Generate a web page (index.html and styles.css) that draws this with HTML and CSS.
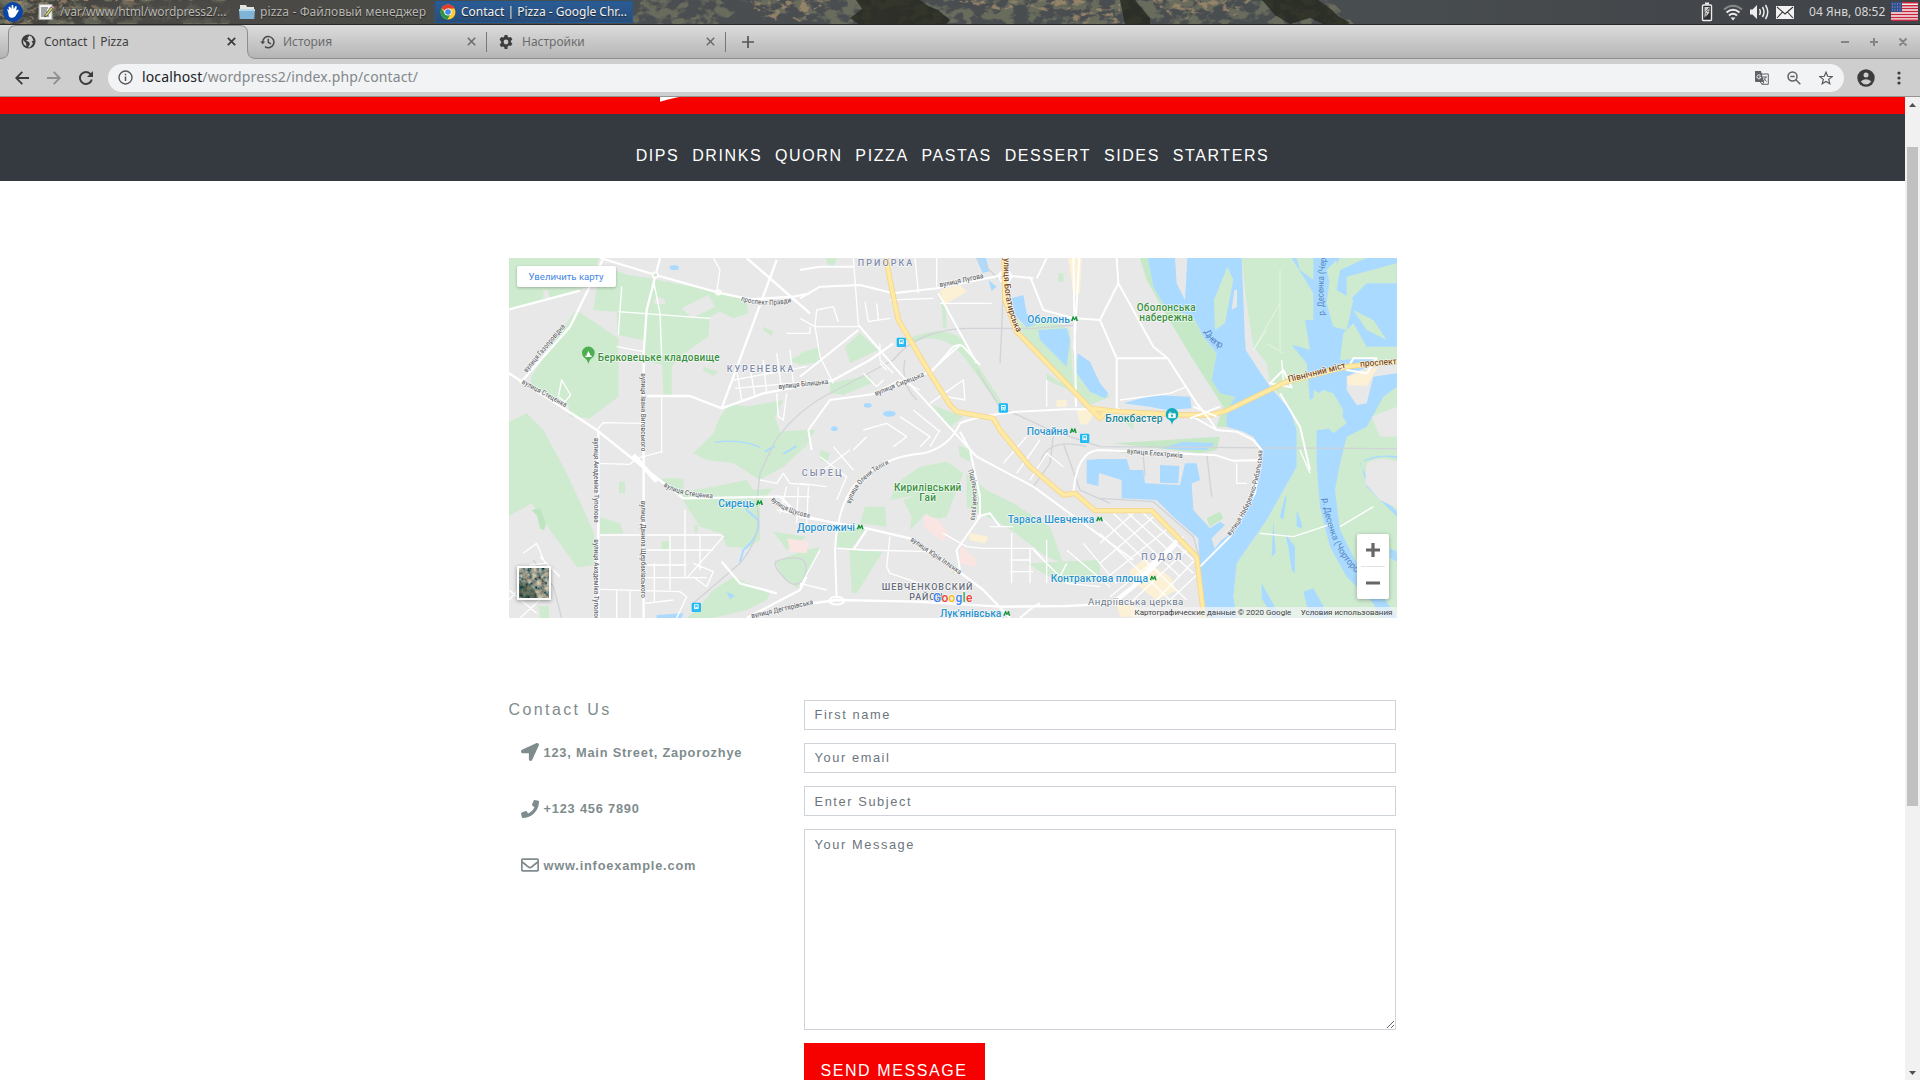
FILE: index.html
```html
<!DOCTYPE html>
<html lang="ru">
<head>
<meta charset="utf-8">
<title>Contact | Pizza</title>
<link rel="stylesheet" href="styles.css">
</head>
<body>
<div class="desktop">
  <header class="panel">
    <svg class="wallpaper" width="1920" height="25" viewBox="0 0 1920 25">
      <defs>
        <filter id="leaves" x="0" y="0" width="100%" height="100%">
          <feTurbulence type="fractalNoise" baseFrequency="0.07 0.1" numOctaves="5" seed="8"/>
          <feColorMatrix values="0 0 0 0 .14  0 0 0 0 .15  0 0 0 0 .11  7 0 0 0 -3.2"/>
          <feComposite in2="SourceGraphic" operator="in"/>
        </filter>
        <filter id="autumn" x="0" y="0" width="100%" height="100%">
          <feTurbulence type="fractalNoise" baseFrequency="0.11 0.16" numOctaves="4" seed="21"/>
          <feColorMatrix values="0 0 0 0 .34  0 0 0 0 .25  0 0 0 0 .15  0 6 0 0 -3.1"/>
          <feComposite in2="SourceGraphic" operator="in"/>
        </filter>
        <linearGradient id="sky"><stop offset="0" stop-color="#45443f"/><stop offset=".3" stop-color="#4b4e50"/><stop offset=".7" stop-color="#484d50"/><stop offset="1" stop-color="#404347"/></linearGradient>
      </defs>
      <rect width="1920" height="25" fill="url(#sky)"/>
      <path d="M0 0H230V25H0zM633 0H720L735 12 720 25H633zM740 0H1330L1355 25H840L790 18z" filter="url(#leaves)"/>
      <path d="M856 0H920L930 7 938 10 950 20 945 25H860L850 18 862 9zM1120 0H1135L1150 18V25H1125zM1262 0H1318L1332 10 1338 16 1350 23 1345 25H1325L1310 18 1290 24 1275 15z" fill="#25281e" opacity=".8"/>
      <path d="M0 0H150L120 12 80 25H0zM750 0H835L815 9 800 22 785 14 770 25 755 12zM950 0H1090L1075 7 1055 14 1030 6 1000 10zM1070 14L1120 4V25H1070zM1150 0H1250L1235 16 1215 8 1180 22z" filter="url(#autumn)" opacity=".85"/>
      <rect y="24" width="1920" height="1" fill="#2a2724"/>
    </svg>
    <div class="tasks">
      <svg class="launcher" width="20" height="20" viewBox="0 0 20 20"><circle cx="10" cy="10" r="10" fill="#0b45a8"/><path d="M4 7l2 1-.5-3 1.400-.6L8.500 7l.2-4 1.400-.1.7 4L12.600 4l1.200.6-.6 4 2-1 .5 1.200-2.500 4c-1 2-2.200 3-4.200 3-3 0-3.500-2-3.500-4z" fill="#fff"/></svg>
      <div class="task task-edit">
        <svg width="16" height="16" viewBox="0 0 16 16"><path d="M1 .5h13v15H1z" fill="#f3f3ef" stroke="#aaa"/><path d="M3 4h7M3 6h6M3 8h6M3 10h4M3 12h8" stroke="#555"/><path d="M7 11l6-8 2 1.500-6 7.500-2.500.7z" fill="#cfd36c" stroke="#333" stroke-width=".7"/><path d="M13 3l1-1.500 2 1.500-1 1.500z" fill="#e38cb3"/></svg>
        <span class="t1">/var/www/html/wordpress2/...</span>
      </div>
      <div class="task task-files">
        <svg width="16" height="14" viewBox="0 0 16 14"><path d="M1 0h6l1 2h7v4H1z" fill="#e8e5df"/><path d="M0 4h16l-.7 10H.7z" fill="#7fb4d6"/><path d="M0 4h16v2H0z" fill="#b6d7e9"/></svg>
        <span class="t2">pizza - Файловый менеджер</span>
      </div>
      <div class="task task-active">
        <svg width="16" height="16" viewBox="0 0 16 16"><circle cx="8" cy="8" r="7.500" fill="#fc3"/><path d="M8 8L1.500 4.200A7.500 7.500 0 0 1 14.600 4.500H8z" fill="#e33b2e"/><path d="M1.500 4.250A7.500 7.500 0 0 0 7.400 15.500L10.500 10 5 9.500z" fill="#279847"/><circle cx="8" cy="8" r="3.600" fill="#fff"/><circle cx="8" cy="8" r="2.800" fill="#4285f4"/></svg>
        <span class="t3">Contact | Pizza - Google Chr...</span>
      </div>
    </div>
    <div class="tray">
      <svg width="12" height="20" viewBox="0 0 12 20"><path d="M4 .5h4v2H4z" fill="#eee"/><rect x="1.500" y="3" width="9" height="15.500" rx="1" fill="#2b2d30" stroke="#eee" stroke-width="1.400"/><path d="M3.500 5h5v4l-5 7z" fill="#ccc"/><path d="M8 6l-5 5h3l-2 5 5-6H6z" fill="#fff" stroke="#222" stroke-width=".5"/></svg>
      <svg class="wifi" width="20" height="17" viewBox="0 0 20 17" fill="none" stroke-width="2"><path d="M1 5.500Q10-2 19 5.500" stroke="#888"/><path d="M3.500 8.500Q10 3 16.500 8.500M6 11.500Q10 8 14 11.500" stroke="#eee"/><path d="M7.500 13.500h5L10 16.500z" fill="#eee"/></svg>
      <svg class="vol" width="20" height="18" viewBox="0 0 20 18"><path d="M0 6.500h2.500L7 2v14l-4.500-4.500H0z" fill="#eee"/><path d="M9.500 6q1.700 3 0 6M12.500 4q3 5 0 10M15.500 2q4.500 7 0 14" fill="none" stroke="#eee" stroke-width="1.500"/></svg>
      <svg class="mail" width="18" height="13" viewBox="0 0 18 13"><rect width="18" height="13" fill="#f2f2f2"/><path d="M1 1l8 7 8-7M1 12l5.500-6M17 12l-5.500-6" fill="none" stroke="#333" stroke-width="1.100"/></svg>
      <span class="clock">04 Янв, 08:52</span>
      <svg class="flag" width="27" height="19" viewBox="0 0 27 19"><path fill="#f7f2f2" d="M0 0h27v19H0z"/><path d="M0 .7h27M0 3.700h27M0 6.600h27M0 9.500h27M0 12.400h27M0 15.400h27M0 18.300h27" stroke="#c8243e" stroke-width="1.500"/><path fill="#34508c" d="M0 0h11v10H0z"/><path d="M1 2h10M1 5h10M1 8h10" stroke="#8da0c8" stroke-dasharray="1 1.500"/></svg>
    </div>
  </header>

  <div class="tabstrip">
    <svg class="tab-shape" width="256" height="34" viewBox="0 0 256 34"><path d="M0 33.500Q8.500 33.500 8.500 25V8Q8.500.5 16 .5H240Q247.500.5 247.500 8V25Q247.500 33.500 256 33.500V34H0z" fill="#cecece"/><path d="M0 33.500Q8.500 33.500 8.500 25V8Q8.500.5 16 .5H240Q247.500.5 247.500 8V25Q247.500 33.500 256 33.500" fill="none" stroke="#8e8e8e"/></svg>
    <div class="tab tab-on">
      <svg width="15" height="15" viewBox="0 0 15 15"><circle cx="7.500" cy="7.500" r="7" fill="#3c3c3c"/><path d="M8.500 1.500l-2 2.500 1 1.500-2.500 1 3 1.500 1 2-2 3.500 2-.2 3-3.800-1.500-2 2-1-2-4zM2 6l3 3 .5 3.500L2.500 10z" fill="#cecece"/></svg>
      <span class="tt1">Contact | Pizza</span>
      <svg class="x" width="9" height="9" viewBox="0 0 9 9"><path d="M.8.8l7.400 7.400M8.200.8L.8 8.200" stroke="#3a3a3a" stroke-width="1.700"/></svg>
    </div>
    <div class="tab tab-hist">
      <svg width="15" height="14" viewBox="0 0 15 14" fill="none" stroke="#4a4a4a" stroke-width="1.500"><path d="M2.700 7A5.600 5.600 0 1 1 5 11.600"/><path d="M.2 6.500h5L2.700 9.300z" fill="#4a4a4a" stroke="none"/><path d="M8.300 3.800v3.500l2.600 1.500"/></svg>
      <span class="tt2">История</span>
      <svg class="x" width="9" height="9" viewBox="0 0 9 9"><path d="M.8.8l7.400 7.400M8.200.8L.8 8.200" stroke="#6a6a6a" stroke-width="1.500"/></svg>
    </div>
    <div class="tab tab-set">
      <svg width="14" height="14" viewBox="0 0 14 14"><path fill="#3d3d3d" fill-rule="evenodd" d="M5.600 0h2.800l.4 1.900 1.300.7 1.800-.7 1.500 2.500-1.500 1.300v1.600l1.500 1.300-1.500 2.500-1.800-.7-1.300.7L8.400 14H5.600l-.4-1.900-1.300-.7-1.800.7L.6 9.600l1.500-1.300V6.700L.6 4.400l1.500-2.500 1.800.7 1.300-.7zM7 4.600a2.400 2.400 0 1 0 0 4.800 2.400 2.400 0 0 0 0-4.800z"/></svg>
      <span class="tt3">Настройки</span>
      <svg class="x" width="9" height="9" viewBox="0 0 9 9"><path d="M.8.8l7.400 7.400M8.200.8L.8 8.200" stroke="#6a6a6a" stroke-width="1.500"/></svg>
    </div>
    <svg class="newtab" width="12" height="12" viewBox="0 0 12 12"><path d="M6 0v12M0 6h12" stroke="#555" stroke-width="1.700"/></svg>
    <svg class="winbtns" width="68" height="10" viewBox="0 0 68 10" stroke="#858585" stroke-width="2"><path d="M0 5h8M29 5h8M33 1v8M58.500 1.500l7 7M65.500 1.500l-7 7"/></svg>
  </div>

  <div class="toolbar">
    <svg class="back" width="14" height="14" viewBox="0 0 14 14" fill="none" stroke="#3c3c3c" stroke-width="1.800"><path d="M14 7H1.500M7.300.8L1.200 7l6.100 6.200"/></svg>
    <svg class="fwd" width="14" height="14" viewBox="0 0 14 14" fill="none" stroke="#8f8f8f" stroke-width="1.800"><path d="M0 7h12.500M6.700.8L12.800 7l-6.100 6.200"/></svg>
    <svg class="reload" width="14" height="14" viewBox="0 0 14 14"><path d="M11.700 3.300A6 6 0 1 0 12.800 8.500" fill="none" stroke="#3c3c3c" stroke-width="1.900"/><path d="M14 0v6H8z" fill="#3c3c3c"/></svg>
    <div class="omnibox">
      <svg width="15" height="15" viewBox="0 0 15 15"><circle cx="7.500" cy="7.500" r="6.500" fill="none" stroke="#55585c" stroke-width="1.400"/><path d="M7.500 6.500V11M7.500 3.800v1.500" stroke="#55585c" stroke-width="1.500"/></svg>
      <span class="url">localhost<i>/wordpress2/index.php/contact/</i></span>
      <svg class="trans" width="14" height="14" viewBox="0 0 14 14"><path d="M5 3h8.300v10.300H7.500L5 11z" fill="#f1f3f4" stroke="#5f6368"/><path d="M0 0h6l3 11H1a1 1 0 0 1-1-1z" fill="#5f6368"/><path d="M5.500 4.500A2 2 0 1 0 5.600 7V6H4" fill="none" stroke="#f1f3f4"/><path d="M7.500 6h4.500M10.500 6q-.5 3-2.500 4.500M9 7.500l2.500 3M7 13.500l2-2.500" stroke="#5f6368" fill="none"/></svg>
      <svg class="mag" width="14" height="14" viewBox="0 0 14 14" fill="none" stroke="#5f6368" stroke-width="1.500"><circle cx="5.500" cy="5.500" r="4.500"/><path d="M8.800 8.800l4.500 4.500M3.300 5.500h4.400"/></svg>
      <svg width="14" height="14" viewBox="0 0 14 14"><path d="M7 1.200l1.700 4.100 4.400.3-3.400 2.800 1.100 4.300L7 10.400l-3.800 2.300 1.100-4.300L.9 5.600l4.400-.3z" fill="none" stroke="#55585c" stroke-width="1.200"/></svg>
    </div>
    <svg class="avatar" width="18" height="18" viewBox="0 0 18 18"><circle cx="9" cy="9" r="8.700" fill="#3c3c3c"/><circle cx="9" cy="6" r="2.500" fill="#cecece"/><path d="M3.700 12.500Q9 8 14.300 12.500Q12 15.500 9 15.500T3.700 12.500z" fill="#cecece"/></svg>
    <svg class="dots" width="4" height="14" viewBox="0 0 4 14" fill="#3c3c3c"><circle cx="2" cy="2" r="1.600"/><circle cx="2" cy="7" r="1.600"/><circle cx="2" cy="12" r="1.600"/></svg>
  </div>

  <div class="viewport">
    <main class="page">
      <div class="brandbar"><svg width="20" height="5" viewBox="0 0 20 5"><path d="M0 0H19L8 2.500 0 4.700z" fill="#fff"/></svg></div>
      <nav class="menu">
        <a>DIPS</a><a>DRINKS</a><a>QUORN</a><a>PIZZA</a><a>PASTAS</a><a>DESSERT</a><a>SIDES</a><a>STARTERS</a>
      </nav>
      <div class="container">
        <div class="map">
<svg class="tiles" viewBox="27 24 2664 1080" width="888" height="360">
<defs>
<filter id="sat" x="0" y="0" width="100%" height="100%"><feTurbulence type="fractalNoise" baseFrequency=".07" numOctaves="5" seed="4"/><feColorMatrix values="1.100 0 0 0 -.26  .9 .2 0 0 -.24  .6 .3 0 0 -.2  0 0 0 0 1"/></filter>
</defs>
<rect x="27" y="24" width="2664" height="1080" fill="#e8e8e8"/>
<g fill="#ceebcf">
<path d="M27 24H297L290 50 240 122 130 150 27 178zM300 45L385 75 450 85 650 125 740 150 745 190 700 205 660 185 630 200 625 260 545 315 515 350V435H490L487 345 430 330V270L352 255 350 185 280 180zM228 180L355 265V440L270 505 210 500 205 465 90 410 95 380 150 290z"/>
<path d="M27 515L80 490 130 540 190 650 240 755 282 850V945L232 952 150 840 95 760 27 798z"/>
<path d="M640 550L660 500 690 460 740 470 850 450 825 500 840 545 905 540 905 600 850 650 780 690 700 640 620 630 580 610zM485 685H550V725L640 710 740 690 760 720 820 715 780 760V870L740 895 680 890 665 850 600 830 545 745 490 705zM300 802L360 820 370 850 300 852zM590 1080L640 1020 700 980 810 1030 800 1050 740 1080 640 1104H560zM825 935L900 905 960 890 920 980 890 1015 850 980zM820 845L920 860 860 900zM610 350l45 15-15 12-30-15zM790 230l30 15-5 12-25-15zM865 330L960 290V335L900 345zM357 695h18v35h-18zM485 873h22v25h-22zM583 825h10v22h-10zM640 825h14v22h-14zM115 1068h32v36h-25z"/>
<path d="M980 24h30l-10 30-20-15zM900 310L960 290 950 330 900 340zM1035 290L1080 250 1135 300 1050 340zM990 400L1110 375 1115 400 1030 435 990 430zM1315 130l20 0 5 105-10 0-5-60zM1230 265Q1330 220 1390 270L1430 340 1520 480 1505 480 1410 345Q1330 230 1240 280zM1295 465L1390 500 1350 530zM1515 180L1540 140 1560 220 1640 200 1710 240 1720 420 1700 400 1640 340 1560 240zM1640 370L1730 430 1640 390zM1720 310L1830 440 1770 465 1720 420zM1675 70h15v25h-15z"/>
<path d="M1190 700L1260 650 1340 635 1390 670 1370 720 1340 800 1300 810 1280 790 1230 840 1235 800 1210 750 1250 735 1170 750zM1400 670L1460 720 1540 760 1650 830 1690 940 1640 920 1520 830 1440 790 1400 770zM1375 585L1410 600V635L1380 620zM1010 840L1100 830 1055 895 1010 890zM1048 900L1148 905 1070 1030 1055 1030zM1095 770L1155 770 1160 830 1080 820zM900 540H945L910 600zM960 600l30 10-10 30-20-10zM1580 940L1800 930V990L1680 1000zM1360 940l25 30-30 0zM1850 495l50 0 0 45z"/>
<path d="M2225 24H2691V1104H2205L2200 1050 2210 940 2300 810 2390 650 2390 540 2370 480 2280 360 2240 250z"/>
<path d="M1920 24H1943L1960 110 1995 170 2080 200 2110 260 2150 310 2135 390 2205 430 2180 530H2150L2170 470 2080 330 1990 180 1940 90zM1840 580L2160 560 2150 600 2100 610zM2120 805l40-20 10 20-40 25zM1865 600h60v10h-60z" fill="#c5e8c6"/>
</g>
<path d="M95 780l25-5 18 45-5 20-12-3-10-40z" fill="#bfe5c0"/>
<g fill="#aadaff">
<path d="M1943 24H2025L2030 100 2055 150 2062 24H2225L2230 100 2237 300 2270 350 2310 410 2370 480 2390 540V650L2300 810 2210 940 2200 1040 2210 1104H2115L2100 950 2165 870 2200 845 2265 730 2285 650V600L2260 560 2230 545 2180 530V490L2205 440 2160 430 2135 390 2150 310 2110 260 2080 200 1995 170 1960 110z"/>
<path d="M1760 630L1800 627H1880L1890 660H1930L1935 700 2040 705 2055 640H2090L2100 690 2075 700 2080 780 2130 835 2160 815 2175 825 2135 865 2145 900 2100 950 2095 865 2020 800 1970 750 1865 745V690L1800 670H1797L1795 708 1760 700zM1980 645l58 3-3 52-55-2z"/>
<path d="M2375 24H2390L2400 60 2440 90V130L2410 80zM2520 24L2440 24 2440 210 2415 210 2430 300 2400 290 2375 285 2420 340 2430 450 2470 420 2500 430 2530 480 2520 530 2460 540H2450V640L2460 770 2490 890 2540 980 2620 1060 2640 1104H2691L2650 1040 2580 960 2520 840 2505 720 2520 640 2540 560 2600 530 2650 440 2691 410V345L2600 325 2520 330 2530 250 2560 220 2600 290 2691 290V24L2600 24 2520 60 2510 120 2560 150 2540 240 2500 230 2480 160 2490 80z"/>
<path d="M2580 640Q2640 610 2691 625V618Q2610 610 2583 640L2600 710 2691 800V785L2615 710zM2670 895l21 10v30l-21-12zM2320 810l7 100-12 10zM2355 850l30 40v80l-10-10-10-70zM2390 780l15 40v15l-15-5zM2285 1000l25 45 35 59h-25l-35-60zM2410 1025l30-10 50 89h-60zM2340 800l15-60 5 0-10 70z"/>
<path d="M1870 460L1960 435 2070 440 2075 475 2000 480 1950 470zM1800 405l25 25-25 12zM1985 595L2050 575 2145 580 2120 600 2050 600zM1428 24h30l10 40-20 5zM1465 90l25 20-15 12zM1535 145L1570 135 1580 190 1605 225 1580 232 1540 190zM1615 240L1700 235 1710 270 1700 350 1660 310 1620 270zM1733 310L1770 335 1800 400 1825 430 1815 445 1770 425 1730 370z"/>
<ellipse cx="1168" cy="491" rx="19" ry="9"/><ellipse cx="1103" cy="466" rx="12" ry="7"/><ellipse cx="1003" cy="536" rx="10" ry="7"/><ellipse cx="523" cy="53" rx="14" ry="7"/><path d="M470 1095l80-5-5 14h-75zM680 1025l25 12-15 10z"/>
<path d="M645 577Q720 565 780 592" fill="none" stroke="#aadaff" stroke-width="4"/>
<path d="M795 605L825 588M850 612L890 588M735 750L740 780 775 810Q780 860 730 900L720 935" fill="none" stroke="#aadaff" stroke-width="6"/>
</g>
<g fill="#ceebcf"><path d="M2182 50L2200 90 2175 220 2145 240 2142 150zM2440 420L2500 450 2540 520 2500 550 2445 490zM2480 60l30-30 0 20-20 50zM2540 80l150-40v60l-90 0-60 60zM2560 180l60 30 40 60-60-30z"/></g>
<g fill="#e8e8e8"><path d="M2225 24L2240 160 2260 290 2300 340 2310 400 2270 350 2235 270zM2540 380L2600 350 2691 345V370L2620 380 2600 460 2570 465 2540 420zM2600 640Q2640 615 2691 635V775L2640 750 2595 700zM2615 500L2691 470V560L2640 560zM2195 180l8-60 8 0v50zM460 150l20-10 15 10v12h-30zM545 175l80-40 20 35-70 35zM130 120l12 0 8 25-20 0z"/></g>
<g fill="#fbe5e3"><path d="M1270 795L1310 805 1345 850 1330 875 1275 835zM1380 885L1430 930 1425 950 1380 940zM862 865L925 875 920 910 870 905z"/></g>
<g fill="#fdf1d5"><path d="M1320 120L1380 105 1400 125 1330 165zM1705 24h40l-5 106-20 5-10-75zM1670 450h30v20h-30zM1730 480h60l-30 45-20-5zM1410 850L1465 860 1455 880 1408 870zM2540 380L2635 350 2600 408 2545 405zM1890 960l40-30 80 50 20 40-60 30-80-60zM1850 1060l60 10 20 30h-70z"/></g>
<g fill="none" stroke="#d0d3d7" stroke-width="4"><path d="M827 570Q900 470 1010 420L1180 330Q1250 240 1400 235H1600L1730 225M827 570L780 670 770 760Q790 860 720 940L580 1060M1520 480L1650 540 1800 590 2691 596M1430 24L1510 100 1505 240 1500 340M1505 480L1430 360M1660 560L1650 640 1600 710M1690 580L1740 720 1830 760M1760 590Q1640 560 1620 640M1800 745L1960 755 2080 860 2100 930M1930 620l5 60M2120 610l15 130M827 935Q860 920 900 925 930 935 910 990 880 1020 850 980 820 950 827 935M1215 330Q1200 400 1250 450M100 930L160 1010 185 1104"/></g>
<g fill="none" stroke="#fff" stroke-width="4" stroke-linejoin="round">
<path d="M640 24L660 60 650 125M355 185L630 205M365 110L355 255M460 90L480 190 485 320M430 305L350 290M560 438H440M485 435V610M290 640L390 643 410 625 485 605M300 855H660L670 860 560 985M555 780V985M435 900H640M435 945H560M435 983H620M510 855V1020M600 855V960M463 940V1055M300 1018L540 1025 560 1040 530 1104M350 1020V1104M390 1022V1104M435 1060L520 1050M580 940L640 965 620 1010 580 980M70 910L110 880 135 940 90 945M120 920L180 980M27 1050L90 980M60 1104L130 1040M27 1020L110 1090M290 540L310 518 430 520M175 440L185 390 212 435 195 455z"/>
<path d="M710 360L725 450M750 350L765 440M790 330L800 430M830 310L845 420M870 300L880 400M700 390L920 350M705 415L930 395M830 430L835 500 850 510 860 430M780 690L830 700 850 670 870 700 930 705M860 710L840 790M895 710L890 820M925 710L920 830M840 740H930M830 780L970 810M860 250h70v-20M900 700L980 710M960 620L1040 680 1010 750M970 660L1050 600M1000 590L1060 660"/>
<path d="M1170 150L1300 145M1095 155L1105 215 1170 205M1130 160L1135 210M1060 24L1075 225M1245 24L1255 130M1310 24V110M945 230L950 180 1000 170 1015 215M900 205L945 230H1075M945 230L960 320 1000 400M1320 160H1475M1640 390V470M1290 460L1390 390 1395 450 1340 440M1140 280V330L1180 370M1090 370L1130 410 1150 390M1160 360L1140 340M1120 430L1200 390 1260 420M1090 540L1160 520 1220 560 1180 590M1200 500L1290 560 1260 590M1240 480L1320 545M1100 560L1060 600M1290 590L1320 540"/>
<path d="M1010 895L1090 900 1300 905M1170 860L1160 950 1170 970 1260 1000M1330 850L1400 890 1450 895H1600L1640 940M1640 870V1000M1590 895V1000M1535 850V1000M1530 930H1590M1530 965H1600M1540 830L1470 830M1590 690L1640 610 1690 650M1550 670L1620 570M1510 640L1580 560M1300 905L1370 970M1600 900L1700 1000 1800 1010M960 900L900 1010M900 1000L980 1020M1700 940L1680 980"/>
<path d="M1800 880L1900 790M1800 940L1960 800M1800 1000L2010 830M1830 1040L2050 860M1890 1060L2070 890M1960 1060L2085 930M1840 790L2040 980M1880 785L2080 970M1800 800L2060 1050M1800 850L2020 1060M1930 790L2080 930M2000 1060L2095 970M1750 880L1850 1000M1830 1010L1700 900"/>
<path d="M2350 390L2345 330M2280 850L2380 860 2500 820M2400 600L2430 670M2520 830L2620 770M1860 450L2010 430 2060 410M2200 632h80M2210 640V700H2240"/>
<path d="M2340 300V60M2340 160L2260 300 2300 240M2300 280L2350 310" stroke-width="2" opacity=".7"/>
</g>
<g fill="none" stroke="#fff" stroke-width="8" stroke-linejoin="round">
<path d="M480 24L440 180 431 310V1104M300 24L467 75 655 128 750 148 880 140 930 130M308 30L210 230 60 400M240 122L27 178M27 370L230 500 290 540 440 660 550 745 840 740 900 800 1100 835 1230 865 1370 960 1450 1020 1530 1104M440 438H570L665 475 790 430 1000 390 1110 330 1180 280M665 475L830 30M295 540V1104M740 24L930 190M900 1065L1010 1050 1250 1055 1500 1070 1700 1068 1850 1060M740 1104L900 1020 920 980M665 935L720 1000 830 1030" stroke-width="7"/>
<path d="M900 145L960 110 1080 105 1180 130 1310 115 1510 75M1600 85L1510 75M1610 85L1640 24M1590 80L1630 180 1720 205M900 60L960 50 1060 50M1075 225L1200 370 1430 620 1600 710 1900 930M1075 240L1000 300 900 380M935 600L925 540 990 450 1140 430 1290 365 1380 285M1315 130L1430 340M1290 370L1360 290Q1380 280 1390 290L1440 345M1010 1050L1005 900Q1010 780 1060 710 1140 620 1270 610 1350 590 1380 520 1420 500 1550 485L1700 478H1860M1720 24L1728 470M1738 24L1722 300M1728 205L1800 210 1855 100 1960 290 2003 325 2090 460 2130 510M1800 210L1850 325H2003M1850 325V480M1855 100L1850 24M1720 730Q1730 600 1800 600L2150 616Q2190 630 2200 632L2280 630M2060 490L2150 540 2210 545 2260 570 2285 600 2265 730 2190 860 2100 950M1380 545L1410 600 1440 740 1440 800 1370 900 1380 960M1430 800L1470 790 1500 830M1560 1104L1600 1070 1620 1060M1060 900L1100 840M1900 1000L2030 870M2350 360L2310 400 2375 412zM2340 430L2400 530 2430 660M2540 360L2560 325 2630 325 2600 370z" stroke-width="6"/>
<path d="M400 615L470 695M1850 1050L1900 1010 2030 880" stroke-width="13"/><ellipse cx="1010" cy="1052" rx="22" ry="12" stroke-width="6"/><circle cx="466" cy="75" r="8" fill="#ceebcf" stroke-width="5"/><circle cx="655" cy="127" r="7" stroke-width="5"/><circle cx="1515" cy="80" r="18" stroke-width="6"/>
</g>
<g fill="none" stroke-linejoin="round"><path d="M1158 24L1170 90 1195 210 1290 370 1350 465 1370 485 1480 505 1500 540 1590 650 1690 735 1725 730 1785 782 1955 782 2090 920 2112 1104M1512 24L1515 150 1550 245 1680 380 1770 475 1860 485 2050 495H2130L2180 482 2360 395 2540 350 2691 335M1770 475L1800 505 1820 480" stroke="#f5d589" stroke-width="16"/><path d="M1158 24L1170 90 1195 210 1290 370 1350 465 1370 485 1480 505 1500 540 1590 650 1690 735 1725 730 1785 782 1955 782 2090 920 2112 1104M1512 24L1515 150 1550 245 1680 380 1770 475 1860 485 2050 495H2130L2180 482 2360 395 2540 350 2691 335M1770 475L1800 505 1820 480" stroke="#ffeaa3" stroke-width="11"/><path d="M2090 460L2130 510 2150 540M2070 505L2160 470M2080 470L2150 500" stroke="#fff" stroke-width="6"/></g>
<defs>
<path id="p1" d="M80 368L200 225"/><path id="p2" d="M64 400L200 475"/><path id="p3" d="M722 152Q800 175 876 156"/><path id="p4" d="M490 708Q530 740 645 745"/><path id="p5" d="M812 750Q850 790 935 805"/><path id="p6" d="M1052 762Q1075 680 1178 638"/><path id="p7" d="M1403 662Q1430 720 1410 815"/><path id="p8" d="M1230 872L1380 975"/><path id="p9" d="M1512 24Q1505 160 1552 250"/><path id="p10" d="M2112 245Q2135 290 2170 295"/><path id="p11" d="M2474 196Q2465 100 2480 24"/><path id="p12" d="M2468 745Q2485 900 2580 980"/><path id="p13" d="M2190 858Q2280 750 2288 595"/><path id="p14" d="M1880 610L2050 624"/>
</defs>
<g class="street">
<text><textPath href="#p1" textLength="180" lengthAdjust="spacingAndGlyphs">вулиця Газопровідна</textPath></text><text><textPath href="#p2" textLength="150" lengthAdjust="spacingAndGlyphs">вулиця Стеценка</textPath></text><text><textPath href="#p3" textLength="154" lengthAdjust="spacingAndGlyphs">проспект Правди</textPath></text><text><textPath href="#p4" textLength="155" lengthAdjust="spacingAndGlyphs">вулиця Стеценка</textPath></text><text><textPath href="#p5" textLength="130" lengthAdjust="spacingAndGlyphs">вулиця Щусова</textPath></text><text><textPath href="#p6" textLength="172" lengthAdjust="spacingAndGlyphs">вулиця Олени Теліги</textPath></text><text><textPath href="#p7" textLength="150" lengthAdjust="spacingAndGlyphs">Подільський узвіз</textPath></text><text><textPath href="#p8" textLength="180" lengthAdjust="spacingAndGlyphs">вулиця Юрія Іллєнка</textPath></text><text><textPath href="#p13" textLength="280" lengthAdjust="spacingAndGlyphs">вулиця Набережно-Рибальська</textPath></text><text><textPath href="#p14" textLength="168" lengthAdjust="spacingAndGlyphs">вулиця Електриків</textPath></text>
<text transform="translate(424 370) rotate(90)" textLength="234" lengthAdjust="spacingAndGlyphs">вулиця Івана Виговського</text><text transform="translate(281 564) rotate(90)" textLength="254" lengthAdjust="spacingAndGlyphs">вулиця Академіка Туполова</text><text transform="translate(283 868) rotate(90)" textLength="254" lengthAdjust="spacingAndGlyphs">вулиця Академіка Туполова</text><text transform="translate(424 752) rotate(90)" textLength="292" lengthAdjust="spacingAndGlyphs">вулиця Данила Щербаківського</text>
<text transform="translate(836 417) rotate(-6)" textLength="150" lengthAdjust="spacingAndGlyphs">вулиця Білицька</text><text transform="translate(1320 112) rotate(-12)" textLength="134" lengthAdjust="spacingAndGlyphs">вулиця Лугова</text><text transform="translate(1127 438) rotate(-22)" textLength="158" lengthAdjust="spacingAndGlyphs">вулиця Сирецька</text><text transform="translate(755 1105) rotate(-13)" textLength="190" lengthAdjust="spacingAndGlyphs">вулиця Дегтярівська</text>
</g>
<g class="hood"><text x="1073" y="47" textLength="164">ПРИОРКА</text><text x="680" y="366" textLength="200">КУРЕНЁВКА</text><text x="905" y="678" textLength="120">СЫРЕЦ</text><text x="1924" y="930" textLength="120">ПОДОЛ</text></g>
<g class="hood district"><text x="1145" y="1020" textLength="272">ШЕВЧЕНКОВСКИЙ</text><text x="1228" y="1050" textLength="100">РАЙОН</text></g>
<g class="park"><text x="293" y="332" textLength="366">Берковецьке кладовище</text><text x="1182" y="724" textLength="202">Кирилівський</text><text x="1258" y="754" textLength="50">Гай</text><text x="1910" y="183" textLength="177">Оболонська</text><text x="1918" y="214" textLength="161">набережна</text></g>
<g class="metro" transform="translate(0 2)"><text x="1582" y="217" textLength="128">Оболонь</text><text x="1580" y="553" textLength="124">Почайна</text><text x="1523" y="817" textLength="260">Тараса Шевченка</text><text x="1652" y="994" textLength="292">Контрактова площа</text><text x="1320" y="1098" textLength="184">Лук'янівська</text><text x="891" y="841" textLength="174">Дорогожичі</text><text x="655" y="768" textLength="108">Сирець</text></g>
<text class="shop" x="1816" y="515" textLength="172">Блокбастер</text>
<text class="church" x="1764" y="1064" textLength="286">Андріївська церква</text>
<g class="major"><text><textPath href="#p9" textLength="230" lengthAdjust="spacingAndGlyphs">улиця Богатирська</textPath></text><text transform="translate(2366 397) rotate(-14)" textLength="178" lengthAdjust="spacingAndGlyphs">Північний міст</text><text transform="translate(2581 350) rotate(-4)" textLength="110" lengthAdjust="spacingAndGlyphs">проспект</text></g>
<g class="river"><text><textPath href="#p10" textLength="74">Днепр</textPath></text><text><textPath href="#p11" textLength="172" lengthAdjust="spacingAndGlyphs">р. Десенка (Чер</textPath></text><text><textPath href="#p12" textLength="250" lengthAdjust="spacingAndGlyphs">р. Десенка (Чорторо</textPath></text></g>
<defs><path id="metro" d="M0 0l5-14h3l3 7 3-7h3l4 14h-5l-2-7-2 5h-3l-2-5-2 7z" fill="#14943c"/>
<g id="rail"><rect width="28" height="28" rx="4" fill="#1fb9f4"/><rect x="7" y="5" width="14" height="14" rx="2" fill="#fff"/><path d="M9.500 8h9v4h-9zM10 14.500h2.500v2.500h-2.500zM15.500 14.500h2.500v2.500h-2.500z" fill="#1fb9f4"/><path d="M8 21h3v2h-3zM17 21h3v2h-3z" fill="#fff"/></g></defs>
<use href="#metro" x="1713" y="213"/><use href="#metro" x="1709" y="549"/><use href="#metro" x="1788" y="814"/><use href="#metro" x="1949" y="991"/><use href="#metro" x="1510" y="1097"/><use href="#metro" x="1070" y="838"/><use href="#metro" x="768" y="765"/>
<use href="#rail" x="1190" y="263"/><use href="#rail" x="1496" y="460"/><use href="#rail" x="1740" y="551"/><use href="#rail" x="575" y="1058"/>
<path d="M265 342Q262 328 253 323A19 19 0 1 1 277 323Q268 328 265 342z" fill="#4caf50"/><path d="M256 321v-4h4v-3l5-11 5 9v3l5 2v4z" fill="#fff"/>
<path d="M2016 524Q2013 510 2003 507A19 19 0 1 1 2029 507Q2019 510 2016 524z" fill="#12acbd"/><path d="M2006 491h20v12h-20zM2007 487h7" fill="#fff" stroke="#fff" stroke-width="2"/><circle cx="2016" cy="497" r="3.500" fill="#12acbd"/>
<g class="google"><text x="1299" y="1056" textLength="118"><tspan fill="#4285f4">G</tspan><tspan fill="#ea4335">o</tspan><tspan fill="#fbbc05">o</tspan><tspan fill="#4285f4">g</tspan><tspan fill="#34a853">l</tspan><tspan fill="#ea4335">e</tspan></text></g>
</svg>
          <a class="enlarge">Увеличить карту</a>
          <svg class="satellite" width="32" height="32" viewBox="0 0 96 96"><rect width="96" height="96" fill="#555" filter="url(#sat)"/><path d="M0 5L40 35 70 70 96 80M40 0L70 40 80 96" fill="none" stroke="#9b8a74" stroke-width="4" opacity=".45"/><path d="M0 50Q40 30 60 96H0z" fill="#173020" opacity=".45"/></svg>
          <div class="zoom"><svg width="32" height="65" viewBox="0 0 32 65" stroke="#666" stroke-width="3.200"><path d="M9 16h14M16 9v14M9 49h14"/><path d="M4 32.500h24" stroke="#e3e3e3" stroke-width="1"/></svg></div>
          <div class="credits"><span class="c1">Картографические данные © 2020 Google</span><span class="c2">Условия использования</span></div>
        </div>
        <div class="contact">
          <section class="info">
            <h3>Contact Us</h3>
            <p><svg width="18" height="18" viewBox="0 0 512 512"><path d="M444.520 3.520L28.740 195.420c-47.970 22.390-31.980 92.750 19.190 92.750h175.910v175.910c0 51.170 70.360 67.170 92.750 19.190l191.900-415.780c15.990-38.390-25.590-79.970-63.970-63.970z"/></svg><span>123, Main Street, Zaporozhye</span></p>
            <p><svg width="18" height="18" viewBox="0 0 512 512"><path d="M493.400 24.600l-104-24c-11.300-2.600-22.900 3.300-27.500 13.900l-48 112c-4.200 9.800-1.400 21.300 6.900 28l60.600 49.600c-36 76.700-98.900 140.500-177.200 177.200l-49.600-60.600c-6.800-8.300-18.200-11.100-28-6.900l-112 48C3.900 366.500-2 378.100.6 389.400l24 104C27.100 504.200 36.700 512 48 512c256.100 0 464-207.500 464-464 0-11.200-7.700-20.900-18.600-23.400z"/></svg><span>+123 456 7890</span></p>
            <p><svg width="18" height="18" viewBox="0 0 512 512"><path d="M464 64H48C21.490 64 0 85.490 0 112v288c0 26.510 21.490 48 48 48h416c26.510 0 48-21.490 48-48V112c0-26.510-21.490-48-48-48zm0 48v40.805c-22.422 18.259-58.168 46.651-134.587 106.490-16.841 13.247-50.201 45.072-73.413 44.701-23.208.375-56.579-31.459-73.413-44.701C106.180 199.465 70.425 171.067 48 152.805V112h416zM48 400V214.398c22.914 18.251 55.409 43.862 104.938 82.646 21.857 17.205 60.134 55.186 103.062 54.955 42.717.231 80.509-37.199 103.053-54.947 49.528-38.783 82.032-64.401 104.947-82.653V400H48z"/></svg><span>www.infoexample.com</span></p>
          </section>
          <form class="form">
            <input type="text" placeholder="First name">
            <input type="text" placeholder="Your email">
            <input type="text" placeholder="Enter Subject">
            <textarea placeholder="Your Message"></textarea>
            <button type="button">SEND MESSAGE</button>
          </form>
        </div>
      </div>
    </main>
    <aside class="scrollbar">
      <svg width="15" height="15" viewBox="0 0 15 15"><path d="M4 10l3.500-4 3.500 4z" fill="#505050"/></svg>
      <div class="thumb"></div>
      <svg class="down" width="15" height="15" viewBox="0 0 15 15"><path d="M4 6l3.500 4L11 6z" fill="#505050"/></svg>
    </aside>
  </div>
</div>
</body>
</html>
```
FILE: styles.css
```css
* { box-sizing: border-box; }
body { margin: 0; overflow: hidden; background: #fff; }
svg { display: block; flex: none; }
.desktop { display: flex; flex-direction: column; width: 1920px; height: 1080px; font-family: "Noto Sans", sans-serif; }
span { white-space: nowrap; }

/* desktop panel */
.panel { position: relative; height: 25px; flex: none; display: flex; justify-content: space-between; font-size: 12px; color: #b9b7b2; }
.wallpaper { position: absolute; left: 0; top: 0; }
.tasks, .tray { position: relative; display: flex; align-items: center; height: 24px; }
.launcher { margin: 0 10px 0 3px; }
.task { display: flex; align-items: center; gap: 6px; height: 22px; padding: 0 5px; text-shadow: 0 1px 1px #222; }
.task-edit { width: 201px; background: linear-gradient(90deg, transparent, rgba(76, 74, 70, .6) 60%); }
.task-files { width: 198px; gap: 5px; background: rgba(76, 74, 70, .7); }
.task-active { width: 198px; gap: 5px; margin-left: 3px; padding-left: 4px; background: linear-gradient(#2a5c96, #284c78); border: 1px solid #1f5a96; color: #f0f3f6; }
.t1 { letter-spacing: -.14px; }
.t2 { letter-spacing: .13px; }
.tray { padding-right: 2px; color: #d8d8d8; }
.wifi { margin-left: 10px; }
.vol { margin-left: 7px; }
.mail { margin-left: 6px; }
.clock { width: 82px; margin-left: 15px; letter-spacing: .06px; }
.task span, .clock { position: relative; top: -1px; }
.flag { margin-top: -1px; }

/* browser frame */
.tabstrip { position: relative; height: 34px; flex: none; display: flex; align-items: center; background: linear-gradient(#dcdcdc, #b5b5b5); border-bottom: 1px solid #8e8e8e; font-size: 12px; color: #6b6b6b; }
.tab-shape { position: absolute; left: 0; top: 0; }
.tab { position: relative; display: flex; align-items: center; height: 20px; }
.tab .x { margin-left: auto; }
.tab-on { width: 248px; padding: 0 12px 0 21px; gap: 8px; color: #3f3f3f; }
.tab-hist { width: 239px; padding: 0 10px 0 12px; gap: 8px; border-right: 1px solid #777; }
.tab-set { width: 239px; padding: 0 10px 0 12px; gap: 9px; border-right: 1px solid #777; }
.newtab { margin-left: 16px; }
.winbtns { margin: 0 11px 0 auto; }
.toolbar { height: 38px; flex: none; display: flex; align-items: center; padding-left: 15px; background: #cecece; border-bottom: 1px solid #959595; }
.fwd { margin-left: 18px; }
.reload { margin-left: 18px; }
.omnibox { display: flex; align-items: center; width: 1736px; height: 28px; margin-left: 15px; padding: 0 11px 0 10px; border-radius: 14px; background: #f1f3f4; }
.url { margin: -2px 0 0 9px; font-size: 14px; color: #202124; letter-spacing: .13px; }
.url i { font-style: normal; color: #84888c; }
.trans { margin-left: auto; }
.mag { margin: 0 18px; }
.avatar { margin-left: 13px; }
.dots { margin-left: 22px; }

/* page */
.viewport { flex: 1; display: flex; min-height: 0; }
.page { width: 1905px; overflow: hidden; font-family: "Liberation Sans", sans-serif; }
.brandbar { height: 17px; padding-left: 660px; background: #f70000; }
.menu { display: flex; justify-content: center; height: 67px; padding-top: 33px; background: #343a40; color: #fff; font-size: 16px; line-height: 18px; letter-spacing: 1.6px; }
.menu a { padding: 0 6.400px; }
.container { width: 888px; margin: 77px auto 0; }
.map { position: relative; height: 360px; overflow: hidden; font-family: Roboto, sans-serif; }
.map text { paint-order: stroke; stroke: #fff; stroke-width: 4px; stroke-linejoin: round; stroke-opacity: .8; }
.street text { font-size: 22px; font-weight: 500; fill: #6c6f73; }
.hood text { font-size: 27px; font-weight: 500; fill: #7e8bab; }
.district text { fill: #666e7c; }
.park text { font-size: 30px; font-weight: 500; fill: #3a9040; }
.metro text { font-size: 31px; font-weight: 500; fill: #2a93cf; }
.map .shop { font-size: 31px; font-weight: 500; fill: #1b8594; }
.map .church { font-size: 29px; fill: #6c7888; }
.major text { font-size: 27px; font-weight: 500; fill: #7d4e20; }
.map .river text { font-size: 27px; fill: #5485c4; stroke: none; }
.google text { font-size: 36px; font-weight: 500; }
.enlarge { position: absolute; left: 8px; top: 8px; width: 99px; height: 21px; border-radius: 2px; background: #fff; box-shadow: 0 1px 3px rgba(0, 0, 0, .25); color: #4285e4; font-size: 9.600px; line-height: 21px; text-align: center; }
.satellite { position: absolute; left: 8px; bottom: 18px; width: 34px; height: 34px; border: 2px solid #fff; box-shadow: 0 1px 4px rgba(0, 0, 0, .4); }
.zoom { position: absolute; right: 8px; top: 276px; background: #fff; border-radius: 2px; box-shadow: 0 1px 4px rgba(0, 0, 0, .3); }
.credits { position: absolute; right: 0; bottom: 0; display: flex; justify-content: space-between; width: 266px; height: 11px; padding: 0 4px; background: rgba(245, 245, 245, .7); color: #444; font-size: 8px; line-height: 11px; }

.contact { display: flex; margin-top: 82px; }
.info { width: 295px; color: #7f8c8d; }
.info h3 { margin: 0 0 22px; font-size: 16px; font-weight: 400; line-height: 20px; letter-spacing: 2.400px; }
.info p { display: flex; align-items: center; gap: 5px; height: 20px; margin: 0 0 36.500px 12px; font-size: 12.800px; font-weight: 700; letter-spacing: .8px; }
.info svg { fill: #7f8c8d; }
.form { display: flex; flex-direction: column; align-items: flex-start; gap: 13px; width: 592px; }
.form input, .form textarea { display: block; width: 592px; margin: 0; padding: 0 10px; border: 1px solid #ced4da; border-radius: 0; font: 12.800px "Liberation Sans", sans-serif; letter-spacing: 1.600px; }
.form input { height: 30px; }
.form input:nth-child(-n+2) { padding-bottom: 2px; }
.form textarea { height: 201px; padding-top: 7px; }
.form ::placeholder { color: #6c757d; opacity: 1; }
.form button { width: 181px; height: 56px; padding: 0; border: 0; background: #f70000; color: #fff; font: 16px "Liberation Sans", sans-serif; letter-spacing: 1.600px; }

.scrollbar { display: flex; flex-direction: column; width: 15px; background: #f1f1f1; }
.thumb { width: 11px; height: 659px; margin: 35px 0 0 2px; background: #c1c1c1; }
.down { margin-top: auto; }
```
